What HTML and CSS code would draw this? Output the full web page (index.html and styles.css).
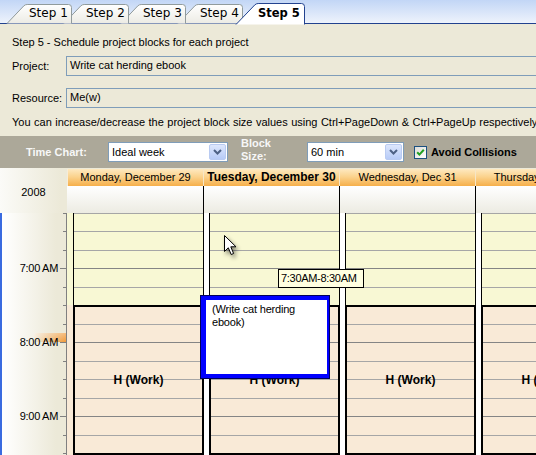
FILE: index.html
```html
<!DOCTYPE html>
<html>
<head>
<meta charset="utf-8">
<title>Schedule project blocks</title>
<link rel="stylesheet" href="styles.css">
</head>
<body>
<div class="window">
  <div class="tabstrip">
    <div class="tab tab-1">
      <svg class="tab-shape" width="65" height="19" viewBox="0 0 65 19">
        <defs>
          <linearGradient id="tabfill" x1="0" y1="0" x2="0" y2="1">
            <stop offset="0" stop-color="#ffffff"/>
            <stop offset="1" stop-color="#ecebe4"/>
          </linearGradient>
        </defs>
        <path class="tab-path" d="M0 19.5 L16.8 1.9 Q18.2 0.5 20.2 0.5 L61.5 0.5 Q64.5 0.5 64.5 3.5 L64.5 19.5"/>
      </svg>
      <span class="tab-label">Step 1</span>
    </div>
    <div class="tab tab-2">
      <svg class="tab-shape" width="65" height="19" viewBox="0 0 65 19"><path class="tab-path" d="M0 19.5 L16.8 1.9 Q18.2 0.5 20.2 0.5 L61.5 0.5 Q64.5 0.5 64.5 3.5 L64.5 19.5"/></svg>
      <span class="tab-label">Step 2</span>
    </div>
    <div class="tab tab-3">
      <svg class="tab-shape" width="65" height="19" viewBox="0 0 65 19"><path class="tab-path" d="M0 19.5 L16.8 1.9 Q18.2 0.5 20.2 0.5 L61.5 0.5 Q64.5 0.5 64.5 3.5 L64.5 19.5"/></svg>
      <span class="tab-label">Step 3</span>
    </div>
    <div class="tab tab-4">
      <svg class="tab-shape" width="65" height="19" viewBox="0 0 65 19"><path class="tab-path" d="M0 19.5 L16.8 1.9 Q18.2 0.5 20.2 0.5 L61.5 0.5 Q64.5 0.5 64.5 3.5 L64.5 19.5"/></svg>
      <span class="tab-label">Step 4</span>
    </div>
    <div class="tab tab-active">
      <svg class="tab-shape" width="69" height="21" viewBox="0 0 69 21"><path class="tab-path-active" d="M0 21.5 L18.8 1.9 Q20.2 0.5 22.2 0.5 L65.5 0.5 Q68.5 0.5 68.5 3.5 L68.5 21.5"/></svg>
      <span class="tab-label">Step 5</span>
    </div>
  </div>

  <div class="form">
    <p class="heading">Step 5 - Schedule project blocks for each project</p>
    <div class="field">
      <span class="field-label">Project:</span>
      <div class="textbox">Write cat herding ebook</div>
    </div>
    <div class="field field-resource">
      <span class="field-label">Resource:</span>
      <div class="textbox">Me(w)</div>
    </div>
    <p class="hint">You can increase/decrease the project block size values using Ctrl+PageDown &amp; Ctrl+PageUp respectively</p>
  </div>

  <div class="toolbar">
    <span class="tb-label tb-chart">Time Chart:</span>
    <div class="combo combo-chart">
      <span class="combo-text">Ideal week</span>
      <span class="combo-btn"><svg width="9" height="6" viewBox="0 0 9 6"><polyline points="1,1 4.5,4.5 8,1" class="chev"/></svg></span>
    </div>
    <span class="tb-label tb-block">Block<br>Size:</span>
    <div class="combo combo-size">
      <span class="combo-text">60 min</span>
      <span class="combo-btn"><svg width="9" height="6" viewBox="0 0 9 6"><polyline points="1,1 4.5,4.5 8,1" class="chev"/></svg></span>
    </div>
    <span class="checkbox"><svg width="11" height="11" viewBox="0 0 11 11"><polyline points="2.2,5.2 4.4,7.6 8.8,2.8" class="tick"/></svg></span>
    <span class="check-label">Avoid Collisions</span>
  </div>

  <div class="calendar">
    <div class="corner">2008</div>
    <div class="day-head day-head-first">Monday, December 29</div>
    <div class="day-head day-head-today">Tuesday, December 30</div>
    <div class="day-head">Wednesday, Dec 31</div>
    <div class="day-head">Thursday, January 1</div>

    <div class="allday"></div>
    <div class="allday"></div>
    <div class="allday"></div>
    <div class="allday"></div>

    <div class="gutter">
      <div class="hour hour-partial"></div>
      <div class="hour"><span class="hour-label">7:00 AM</span><span class="now-mark"></span></div>
      <div class="hour"><span class="hour-label">8:00 AM</span></div>
      <div class="hour"><span class="hour-label">9:00 AM</span></div>
    </div>

    <div class="day day-first">
      <div class="strip"></div>
      <div class="slots"><div class="free"></div><div class="work">H (Work)</div></div>
    </div>
    <div class="day">
      <div class="strip"></div>
      <div class="slots"><div class="free"></div><div class="work">H (Work)</div></div>
    </div>
    <div class="day">
      <div class="strip"></div>
      <div class="slots"><div class="free"></div><div class="work">H (Work)</div></div>
    </div>
    <div class="day">
      <div class="strip"></div>
      <div class="slots"><div class="free"></div><div class="work">H (Work)</div></div>
    </div>

    <div class="drag-box"><div class="drag-inner">(Write cat herding<br>ebook)</div></div>
    <div class="tooltip">7:30AM-8:30AM</div>
    <svg class="cursor" width="14" height="22" viewBox="0 0 14 22"><path d="M0.5 0.5 L0.5 16.5 L4.3 12.8 L7.2 19.5 L9.6 18.5 L6.8 11.8 L12 11.8 Z" class="cursor-path"/></svg>
  </div>
</div>
</body>
</html>
```

FILE: styles.css
```css
html, body {
  margin: 0;
  padding: 0;
}

body {
  width: 536px;
  height: 455px;
  overflow: hidden;
  background: #ece9d8;
  font-family: "Liberation Sans", Arial, sans-serif;
  font-size: 11px;
  color: #000;
}

.window {
  width: 536px;
  height: 455px;
  overflow: hidden;
}

/* ---------- tabs ---------- */
.tabstrip {
  height: 23px;
  border-bottom: 1px solid #22428f;
  background: linear-gradient(to bottom, #c2d6f6, #eef3fc);
  display: flex;
  align-items: flex-end;
  padding-left: 7px;
}

.tab {
  position: relative;
  flex: none;
  width: 65px;
  height: 19px;
}

.tab + .tab {
  margin-left: -8px;
}

.tab-1 { z-index: 5; }
.tab-2 { z-index: 4; }
.tab-3 { z-index: 3; }
.tab-4 { z-index: 2; }

.tab-shape {
  position: absolute;
  left: 0;
  top: 0;
  overflow: visible;
}

.tab-path {
  fill: url(#tabfill);
  stroke: #919b9c;
  stroke-width: 1;
}

.tab-path-active {
  fill: #ffffff;
  stroke: #22428f;
  stroke-width: 1;
}

.tab-label {
  position: relative;
  display: block;
  padding-left: 22px;
  line-height: 19px;
  font-family: "DejaVu Sans", Verdana, sans-serif;
  font-size: 12px;
  white-space: nowrap;
}

.tab.tab-active {
  z-index: 10;
  width: 69px;
  height: 21px;
  margin-left: -7px;
  margin-bottom: -1px;
}

.tab-active .tab-label {
  line-height: 21px;
  font-weight: bold;
  font-size: 11.5px;
}

/* ---------- form ---------- */
.form {
  padding: 12px 0 0 12px;
}

.heading {
  margin: 0;
  line-height: 13px;
  white-space: nowrap;
}

.field {
  display: flex;
  align-items: center;
  height: 20px;
  margin-top: 7px;
}

.field-resource {
  margin-top: 12px;
}

.field-label {
  flex: none;
  width: 54px;
  line-height: 13px;
}

.textbox {
  flex: none;
  width: 500px;
  height: 20px;
  box-sizing: border-box;
  border: 1px solid #7f9db9;
  padding-left: 3px;
  line-height: 16px;
  white-space: nowrap;
}

.hint {
  margin: 8px 0 0;
  line-height: 13px;
  white-space: nowrap;
  word-spacing: 0.4px;
}

/* ---------- toolbar ---------- */
.toolbar {
  margin-top: 7px;
  height: 32px;
  background: #aca899;
  display: flex;
  align-items: center;
  padding-left: 26px;
}

.tb-label {
  flex: none;
  color: #f7f7f7;
  font-weight: bold;
  line-height: 13px;
}

.tb-chart {
  width: 82px;
}

.tb-block {
  align-self: flex-start;
  margin-top: 1px;
  margin-left: 13px;
  width: 66px;
}

.combo {
  flex: none;
  height: 20px;
  box-sizing: border-box;
  border: 1px solid #7f9db9;
  background: #fff;
  display: flex;
  align-items: center;
}

.combo-chart {
  width: 120px;
}

.combo-size {
  width: 97px;
}

.combo-text {
  padding-left: 3px;
  line-height: 13px;
  white-space: nowrap;
}

.combo-btn {
  margin-left: auto;
  margin-right: 1px;
  width: 17px;
  height: 16px;
  box-sizing: border-box;
  border: 1px solid #b9cbf2;
  border-radius: 2px;
  background: linear-gradient(to bottom, #dde7fd, #b7cbf7);
  display: flex;
  align-items: center;
  justify-content: center;
}

.chev {
  fill: none;
  stroke: #4d6185;
  stroke-width: 2;
}

.checkbox {
  flex: none;
  margin-left: 10px;
  width: 13px;
  height: 13px;
  box-sizing: border-box;
  border: 1px solid #1c5180;
  background: linear-gradient(135deg, #dcdcd7, #ffffff);
  display: flex;
  align-items: center;
  justify-content: center;
}

.tick {
  fill: none;
  stroke: #21a121;
  stroke-width: 2;
}

.check-label {
  margin-left: 4px;
  font-weight: bold;
  white-space: nowrap;
}

/* ---------- calendar ---------- */
.calendar {
  position: relative;
  height: 287px;
  overflow: hidden;
  display: grid;
  grid-template-columns: 67px 137px 136px 136px 136px;
  grid-template-rows: 18px 27px 242px;
  background: #ece9d8;
}

.corner {
  grid-row: 1 / span 2;
  display: flex;
  align-items: center;
  justify-content: center;
  padding-top: 2px;
  background: linear-gradient(to right, #fbfbf8, #ece9d8 90%);
}

.day-head {
  margin-top: 1px;
  line-height: 17px;
  text-align: center;
  white-space: nowrap;
  overflow: hidden;
  border-right: 1px solid #f6e6c6;
  background: linear-gradient(to bottom, #fee9c0 0%, #fbd38e 45%, #f6af4a 100%);
}

.day-head-first {
  border-left: 1px solid #f6ecd8;
}

.day-head-today {
  font-weight: bold;
  font-size: 12px;
}

.allday {
  border-right: 1px solid #000;
  background: linear-gradient(to bottom, #ffffff, #ecebe2);
}

.gutter {
  display: flex;
  flex-direction: column;
  border-right: 1px solid #808080;
  background:
    linear-gradient(to bottom, #808080 0 1px, transparent 1px) right 0 top 55px / 6px 74px repeat-y,
    linear-gradient(to bottom, #808080 0 1px, transparent 1px 19px, #808080 19px 20px, transparent 20px 37px, #808080 37px 38px, transparent 38px 56px, #808080 56px 57px, transparent 57px) right 0 top 55px / 3px 74px repeat-y,
    linear-gradient(to right, #3a6be0 0 2px, transparent 2px),
    linear-gradient(to right, #ffffff 5%, #ece9d8 85%);
}

.hour {
  flex: none;
  height: 74px;
  display: flex;
  flex-direction: column;
  align-items: flex-end;
}

.hour-partial {
  height: 55px;
}

.hour-label {
  margin-top: -6px;
  margin-right: 8px;
  line-height: 13px;
  letter-spacing: -0.3px;
  white-space: nowrap;
}

.now-mark {
  margin-top: auto;
  width: 32px;
  height: 9px;
  background:
    linear-gradient(to bottom, rgba(255, 255, 255, 0.35), rgba(255, 255, 255, 0)),
    linear-gradient(to right, rgba(244, 160, 70, 0.08), #f19a3a);
}

.day {
  display: flex;
}

.strip {
  flex: none;
  width: 5px;
  background: #ffffff;
}

.day-first .strip {
  width: 6px;
  background: linear-gradient(to bottom, #f8f8d4 0 92px, #f9ead7 92px);
}

.slots {
  flex: 1;
  display: flex;
  flex-direction: column;
  border-left: 1px solid #000;
  border-right: 1px solid #000;
  background:
    linear-gradient(to bottom, #858585 0 1px, transparent 1px 19px, #a6a6a6 19px 20px, transparent 20px 37px, #a6a6a6 37px 38px, transparent 38px 56px, #a6a6a6 56px 57px, transparent 57px) 0 55px / 100% 74px repeat-y,
    #f8f8d4;
}

.free {
  flex: none;
  height: 92px;
}

.work {
  flex: 1;
  margin: 0 -1px;
  border: 2px solid #000;
  display: flex;
  align-items: center;
  justify-content: center;
  font-weight: bold;
  font-size: 12px;
  white-space: nowrap;
  background:
    linear-gradient(to bottom, #858585 0 1px, transparent 1px 19px, #a6a6a6 19px 20px, transparent 20px 37px, #a6a6a6 37px 38px, transparent 38px 56px, #a6a6a6 56px 57px, transparent 57px) 0 35px / 100% 74px repeat-y,
    #f9ead7;
}

/* ---------- overlays ---------- */
.drag-box {
  position: absolute;
  left: 200px;
  top: 127px;
  width: 130px;
  height: 84px;
  box-sizing: border-box;
  border: 1px solid #00005a;
}

.drag-inner {
  height: 100%;
  box-sizing: border-box;
  border-style: solid;
  border-color: #0000ff;
  border-width: 4px 2px 4px 5px;
  background: #ffffff;
  padding: 3px 0 0 6px;
  line-height: 13px;
  letter-spacing: -0.2px;
}

.tooltip {
  position: absolute;
  left: 278px;
  top: 101px;
  width: 86px;
  height: 19px;
  box-sizing: border-box;
  border: 1px solid #000;
  background: #ffffe1;
  padding-left: 2px;
  line-height: 17px;
  letter-spacing: -0.3px;
  white-space: nowrap;
}

.cursor {
  position: absolute;
  left: 224px;
  top: 67px;
  overflow: visible;
  filter: drop-shadow(2px 3px 2px rgba(0, 0, 0, 0.45));
}

.cursor-path {
  fill: #ffffff;
  stroke: #000;
  stroke-width: 1;
  stroke-linejoin: miter;
}
```
